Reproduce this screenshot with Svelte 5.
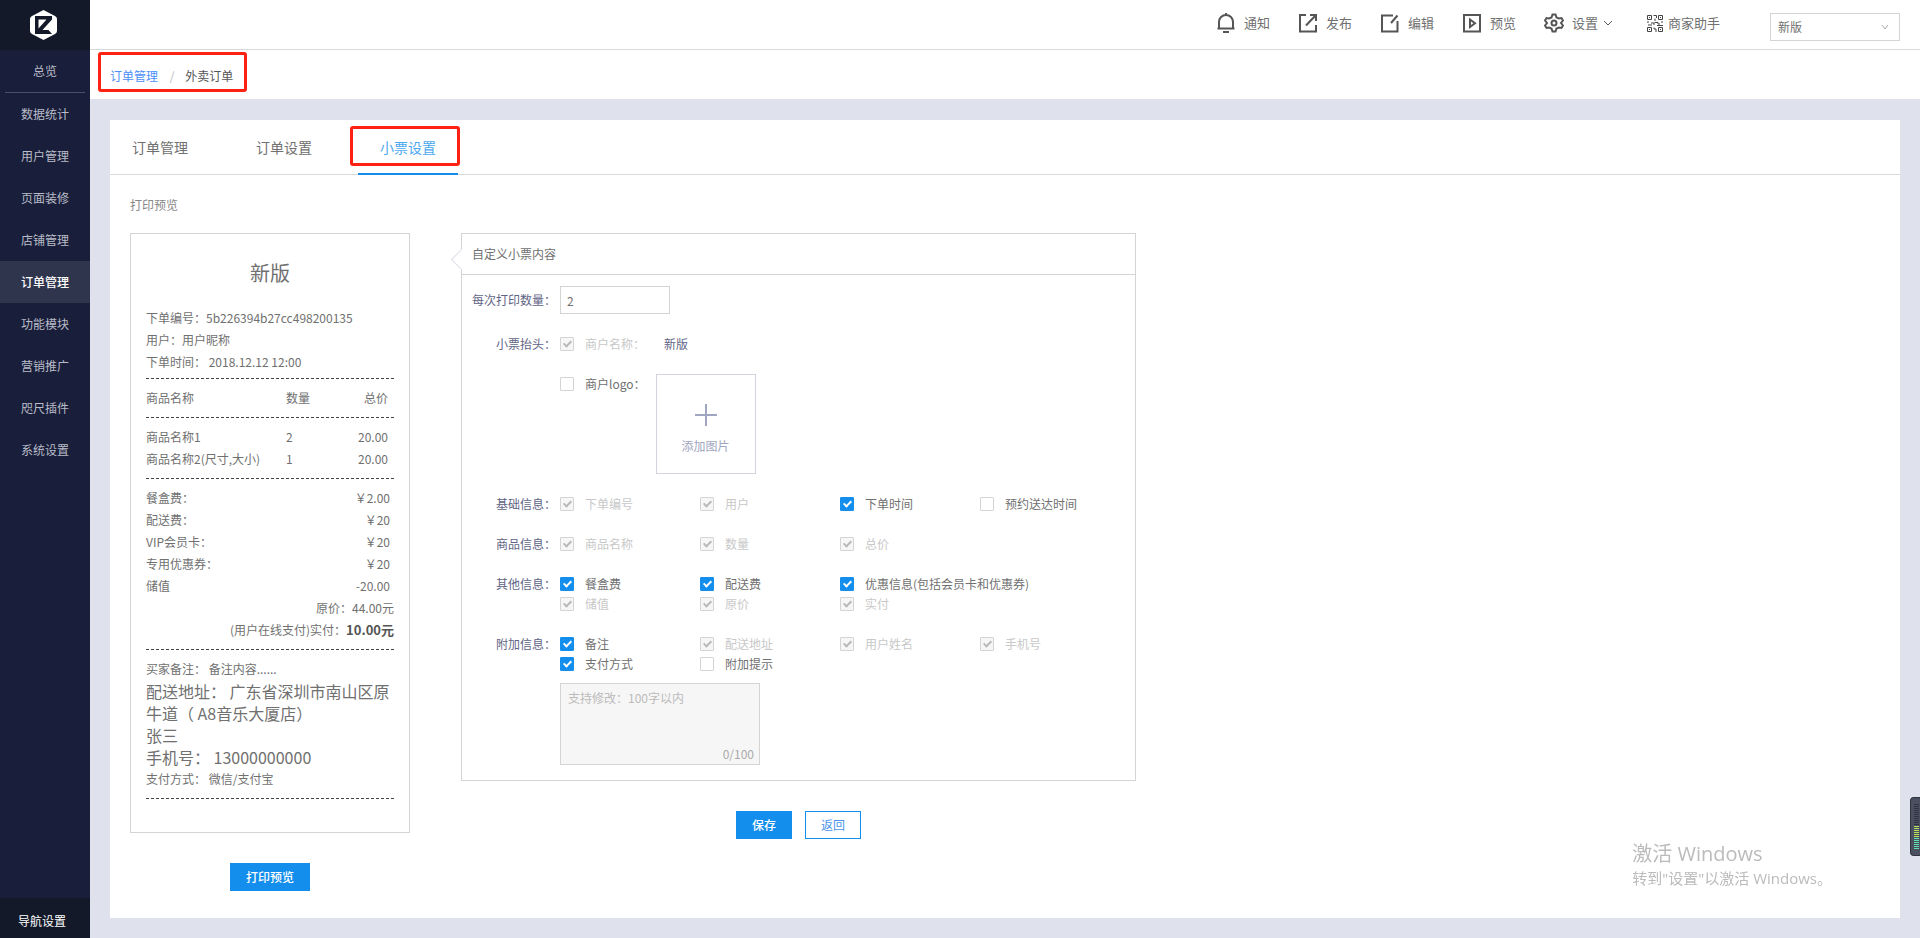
<script lang="ts">
    const menu = ['数据统计', '用户管理', '页面装修', '店铺管理', '订单管理', '功能模块', '营销推广', '咫尺插件', '系统设置'];
    const tabs = ['订单管理', '订单设置', '小票设置'];

    let activeMenu = $state('订单管理');
    let activeTab = $state('小票设置');
    let shop = $state('新版');
    let copies = $state('2');
    let tip = $state('');
    let withLogo = $state(false);

    const goods = [
        { name: '商品名称1', count: 2, price: '20.00' },
        { name: '商品名称2(尺寸,大小)', count: 1, price: '20.00' },
    ];
    const fees = [
        ['餐盒费：', '￥2.00'],
        ['配送费：', '￥20'],
        ['VIP会员卡：', '￥20'],
        ['专用优惠券：', '￥20'],
        ['储值', '-20.00'],
    ];

    let groups = $state([
        { title: '基础信息：', items: [
            { text: '下单编号', on: true, locked: true },
            { text: '用户', on: true, locked: true },
            { text: '下单时间', on: true, locked: false },
            { text: '预约送达时间', on: false, locked: false },
        ] },
        { title: '商品信息：', items: [
            { text: '商品名称', on: true, locked: true },
            { text: '数量', on: true, locked: true },
            { text: '总价', on: true, locked: true },
        ] },
        { title: '其他信息：', items: [
            { text: '餐盒费', on: true, locked: false },
            { text: '配送费', on: true, locked: false },
            { text: '优惠信息(包括会员卡和优惠券)', on: true, locked: false, last: true },
            { text: '储值', on: true, locked: true },
            { text: '原价', on: true, locked: true },
            { text: '实付', on: true, locked: true },
        ] },
        { title: '附加信息：', items: [
            { text: '备注', on: true, locked: false },
            { text: '配送地址', on: true, locked: true },
            { text: '用户姓名', on: true, locked: true },
            { text: '手机号', on: true, locked: true },
            { text: '支付方式', on: true, locked: false },
            { text: '附加提示', on: false, locked: false },
        ] },
    ]);
</script>

<div class="page">
    <aside class="sidebar">
        <a class="logo" href="#home" aria-label="首页">
            <svg width="27" height="30" viewBox="0 0 27 30">
                <path d="M13.5 0 L25 6 Q27 7 27 9 V21 Q27 23 25 24 L13.5 30 L2 24 Q0 23 0 21 V9 Q0 7 2 6 Z" fill="#fff" />
                <path d="M5 6 H22 V9.500 L12.500 20 H18.500 L22 24 H5 Z M8.500 9.500 V18.500 L16.500 9.500 Z" fill="#131929" fill-rule="evenodd" />
            </svg>
        </a>
        <nav>
            <a class="overview" href="#overview">总览</a>
            {#each menu as item}
                <a href="#menu" class:active={activeMenu === item} onclick={() => (activeMenu = item)}>{item}</a>
            {/each}
        </nav>
        <a class="nav-setting" href="#nav">导航设置</a>
    </aside>

    <div class="content">
        <header>
            <div class="tools">
                <a href="#notice">
                    <svg viewBox="0 0 20 20"><path d="M3 15.500 V9 a7 7 0 0 1 14 0 V15.500 M1.500 15.500 H18.500 M10 0 V2 M7 19 H13" /></svg>
                    通知
                </a>
                <a href="#publish">
                    <svg viewBox="0 0 20 20"><path d="M8 2 H2 V18.500 H18 V12 M12 2 H18 V8 M18 2 L8 12.500" /></svg>
                    发布
                </a>
                <a href="#edit">
                    <svg viewBox="0 0 20 20"><path d="M13 2.500 H2 V18.500 H17.500 V8 M17.500 2.500 L11 10" /></svg>
                    编辑
                </a>
                <a href="#preview">
                    <svg viewBox="0 0 20 20"><path d="M2 2 H18 V18.500 H2 Z M8 6.500 V14 L13 10.200 Z" /></svg>
                    预览
                </a>
                <a href="#setting">
                    <svg viewBox="0 0 20 20"><path d="M8.500 1.500 H11.500 L12.500 4.500 L15 5.500 L17.500 5 L19 7.500 L17 10 L19 12.500 L17.500 15 L15 14.500 L12.500 15.500 L11.500 18.500 H8.500 L7.500 15.500 L5 14.500 L2.500 15 L1 12.500 L3 10 L1 7.500 L2.500 5 L5 5.500 L7.500 4.500 Z" /><circle cx="10" cy="10" r="2.500" /></svg>
                    设置
                    <svg class="caret" viewBox="0 0 10 10"><path d="M1 3 L5 7 L9 3" /></svg>
                </a>
                <a href="#helper" class="helper">
                    <svg class="qr" viewBox="0 0 20 20"><path d="M2.500 2.500 H6.500 V6.500 H2.500 Z M13.500 2.500 H17.500 V6.500 H13.500 Z M2.500 14.500 H6.500 V18.500 H2.500 Z M13.500 14.500 H17.500 V18.500 H13.500 Z M4 4.500 H5 M15 4.500 H16 M4 16.500 H5 M15 16.500 H16 M8.500 2.500 H11.500 V5 M10 5.500 V8 M2 9 H4 M3 12 H7 M6 10 H9 V12 M9.500 9.500 H13 V11 H15 M16 9 H18 M9 14.500 V16 H11 V19 M12 12.500 H18" /></svg>
                    商家助手
                </a>
            </div>
            <div class="shop">
                <select bind:value={shop} aria-label="店铺">
                    <option>新版</option>
                </select>
                <svg viewBox="0 0 10 10"><path d="M2 3 L5 7 L8 3" /></svg>
            </div>
        </header>

        <div class="breadcrumb">
            <a href="#orders">订单管理</a>
            <span class="slash">/</span>
            <span>外卖订单</span>
            <i class="mark"></i>
        </div>

        <main>
            <div class="tabs">
                {#each tabs as tab}
                    <button class:active={activeTab === tab} onclick={() => (activeTab = tab)}>
                        {tab}
                        {#if tab === '小票设置'}<i class="mark"></i>{/if}
                    </button>
                {/each}
            </div>

            <h2>打印预览</h2>

            <div class="columns">
                <div class="left">
                    <div class="receipt">
                        <h1>新版</h1>
                        <section class="first">
                            <p>下单编号：5b226394b27cc498200135</p>
                            <p>用户：用户昵称</p>
                            <p>下单时间： 2018.12.12 12:00</p>
                        </section>
                        <table>
                            <thead>
                                <tr><th>商品名称</th><th>数量</th><th>总价</th></tr>
                            </thead>
                            <tbody>
                                {#each goods as g}
                                    <tr><td>{g.name}</td><td>{g.count}</td><td>{g.price}</td></tr>
                                {/each}
                            </tbody>
                        </table>
                        <section>
                            {#each fees as [name, value]}
                                <p class="fee"><span>{name}</span><span>{value}</span></p>
                            {/each}
                            <p class="sum">原价：44.00元</p>
                            <p class="sum">(用户在线支付)实付：<b>10.00元</b></p>
                        </section>
                        <section>
                            <p>买家备注： 备注内容......</p>
                            <p class="big">配送地址： 广东省深圳市南山区原牛道（ A8音乐大厦店）</p>
                            <p class="big">张三</p>
                            <p class="big">手机号： 13000000000</p>
                            <p>支付方式： 微信/支付宝</p>
                        </section>
                    </div>
                    <button class="btn primary">打印预览</button>
                </div>

                <div class="right">
                    <form class="panel" onsubmit={(e) => e.preventDefault()}>
                        <h3>自定义小票内容</h3>
                        <div class="row copies">
                            <label class="title" for="copies">每次打印数量：</label>
                            <input id="copies" type="text" bind:value={copies} />
                        </div>
                        <div class="row">
                            <span class="title">小票抬头：</span>
                            <label class="check locked"><input type="checkbox" checked disabled />商户名称：</label>
                            <span class="shop-name">新版</span>
                        </div>
                        <div class="row logo-row">
                            <span class="title"></span>
                            <label class="check"><input type="checkbox" bind:checked={withLogo} />商户logo：</label>
                            <button class="upload" type="button">
                                <svg width="24" height="24" viewBox="0 0 24 24"><path d="M12 1 V23 M1 12 H23" /></svg>
                                添加图片
                            </button>
                        </div>
                        {#each groups as group}
                            <div class="row">
                                <span class="title">{group.title}</span>
                                <div class="options">
                                    {#each group.items as item}
                                        <label class="check" class:locked={item.locked} class:wide={item.last}>
                                            <input type="checkbox" bind:checked={item.on} disabled={item.locked} />{item.text}
                                        </label>
                                    {/each}
                                </div>
                            </div>
                        {/each}
                        <div class="tip">
                            <textarea bind:value={tip} maxlength="100" placeholder="支持修改：100字以内" aria-label="附加提示内容"></textarea>
                            <span>{tip.length}/100</span>
                        </div>
                    </form>
                    <div class="actions">
                        <button class="btn primary">保存</button>
                        <button class="btn">返回</button>
                    </div>
                </div>
            </div>
        </main>
    </div>

    <div class="watermark">
        <strong>激活 Windows</strong>
        <span>转到"设置"以激活 Windows。</span>
    </div>
    <div class="meter">
        {#each Array(23) as _, n}
            <i class:lit={n > 10} class:low={n > 16}></i>
        {/each}
    </div>
</div>

<style>
    :global(body) {
        background: #dfe1ed;
        color: #707070;
        font: 12px/20px "Noto Sans CJK SC", sans-serif;
    }
    .page * {
        box-sizing: border-box;
    }
    .page {
        display: flex;
        min-height: 100vh;
    }
    a {
        color: inherit;
        text-decoration: none;
    }
    button, input, select, textarea {
        font: inherit;
        color: inherit;
        margin: 0;
    }
    h1, h2, h3, p {
        margin: 0;
        font-weight: normal;
    }
    svg {
        fill: none;
    }

    .sidebar {
        width: 90px;
        flex: none;
        display: flex;
        flex-direction: column;
        background: #191f3a;
        color: #b9bcc8;
        text-align: center;
    }
    .logo {
        height: 50px;
        padding: 10px 4px 0 0;
        background: #131929;
    }
    nav {
        flex: 1;
    }
    nav a {
        display: block;
        line-height: 42px;
    }
    nav .overview {
        margin: 0 5px;
        border-bottom: 1px solid #4b5068;
    }
    nav .active {
        background: #30354e;
        color: #fff;
        font-weight: 500;
    }
    .nav-setting {
        height: 40px;
        padding-right: 6px;
        background: #131929;
        color: #fff;
        line-height: 46px;
    }

    .content {
        flex: 1;
        min-width: 0;
        display: flex;
        flex-direction: column;
    }
    header {
        height: 50px;
        padding-right: 20px;
        display: flex;
        justify-content: flex-end;
        background: #fff;
        border-bottom: 1px solid #d9d9d9;
    }
    .tools {
        display: flex;
        gap: 28px;
        height: 46px;
        align-items: center;
        margin-right: 50px;
        font-size: 13px;
    }
    .tools a {
        display: flex;
        align-items: center;
        gap: 8px;
    }
    .tools .helper {
        gap: 3px;
        margin-left: 4px;
    }
    .tools svg {
        width: 20px;
        height: 20px;
        stroke: #555;
        stroke-width: 2;
    }
    .tools .caret {
        width: 10px;
        height: 10px;
        margin-left: -3px;
        stroke-width: 1;
    }
    .tools .qr {
        stroke: #444;
        stroke-width: 1;
    }
    .shop {
        position: relative;
        width: 130px;
        height: 28px;
        margin-top: 13px;
    }
    .shop select {
        width: 100%;
        height: 28px;
        padding: 0 7px;
        appearance: none;
        background: #fff;
        border: 1px solid #d4d4d4;
        border-radius: 0;
    }
    .shop svg {
        position: absolute;
        right: 10px;
        top: 9px;
        width: 10px;
        height: 10px;
        stroke: #aaa;
        pointer-events: none;
    }

    .breadcrumb {
        position: relative;
        height: 49px;
        padding: 0 20px;
        background: #fff;
        line-height: 51px;
        color: #555;
    }
    .breadcrumb a {
        color: #4b8ff7;
    }
    .slash {
        margin: 0 8px 0 9px;
        color: #bbb;
    }
    .mark {
        position: absolute;
        border: 3px solid #ff2213;
        border-radius: 3px;
        pointer-events: none;
    }
    .breadcrumb .mark {
        left: 8px;
        top: 2px;
        width: 149px;
        height: 40px;
    }

    main {
        flex: 1;
        margin: 21px 20px 20px;
        padding-bottom: 27px;
        background: #fff;
    }
    .tabs {
        display: flex;
        gap: 24px;
        height: 55px;
        border-bottom: 1px solid #d9d9d9;
    }
    .tabs button {
        position: relative;
        width: 100px;
        height: 55px;
        padding: 0 18px 0 22px;
        background: none;
        border: 0;
        border-bottom: 2px solid transparent;
        font-size: 14px;
        white-space: nowrap;
        text-align: left;
    }
    .tabs .active {
        border-color: #138eec;
        color: #4aa8f0;
    }
    .tabs .mark {
        left: -8px;
        top: 6px;
        width: 110px;
        height: 40px;
    }
    h2 {
        margin: 20px 20px 18px;
        font-size: 12px;
        color: #888;
    }
    .columns {
        display: flex;
        gap: 51px;
        padding: 0 20px;
    }
    .left {
        width: 280px;
        text-align: center;
    }
    .receipt {
        min-height: 600px;
        margin-bottom: 30px;
        padding: 24px 15px 0;
        border: 1px solid #d4d4d4;
        text-align: left;
        line-height: 22px;
    }
    .receipt h1 {
        margin-bottom: 19px;
        font-size: 20px;
        line-height: 30px;
        text-align: center;
    }
    .receipt section, thead, tbody {
        padding: 8px 0;
        border-bottom: 1px dashed #444;
    }
    .receipt .first {
        padding: 0 0 5px;
    }
    table, thead, tbody {
        display: block;
    }
    tr {
        display: flex;
    }
    th, td {
        flex: 1;
        padding: 0;
        font-weight: normal;
        text-align: left;
        white-space: nowrap;
    }
    th:first-child, td:first-child {
        flex: 0 0 140px;
    }
    th:last-child, td:last-child {
        padding-right: 6px;
        text-align: right;
    }
    .fee {
        display: flex;
        justify-content: space-between;
        padding-right: 4px;
    }
    .sum {
        text-align: right;
    }
    .sum b {
        font-size: 13px;
        color: #555;
    }
    .big {
        font-size: 16px;
    }

    .btn {
        height: 28px;
        padding: 0 15px;
        background: #fff;
        border: 1px solid #138eec;
        color: #4a94ea;
        line-height: 26px;
    }
    .btn.primary {
        background: #138eec;
        color: #fff;
        font-weight: 500;
    }

    .right {
        flex: 0 1 675px;
    }
    .panel {
        position: relative;
        padding-bottom: 15px;
        border: 1px solid #d4d4d4;
    }
    .panel::before {
        content: "";
        position: absolute;
        left: -8px;
        top: 18px;
        width: 14px;
        height: 14px;
        background: #fff;
        border: solid #dcdfe8;
        border-width: 0 0 1px 1px;
        transform: rotate(45deg);
    }
    h3 {
        margin-bottom: 11px;
        padding-left: 10px;
        border-bottom: 1px solid #d4d4d4;
        font-size: 12px;
        line-height: 40px;
    }
    .row {
        display: flex;
        margin-bottom: 20px;
    }
    .copies {
        align-items: center;
    }
    .title {
        flex: none;
        width: 94px;
        margin-right: 4px;
        text-align: right;
        color: #5f6485;
    }
    .copies input {
        width: 110px;
        height: 28px;
        padding: 0 6px;
        border: 1px solid #d4d4d4;
    }
    .check {
        display: flex;
        align-items: center;
        height: 20px;
        white-space: nowrap;
    }
    .locked {
        color: #c8c8c8;
    }
    .check input {
        appearance: none;
        position: relative;
        width: 14px;
        height: 14px;
        margin-right: 11px;
        border: 1px solid #d4d4d4;
        border-radius: 1px;
        background: #fff;
    }
    .check input:checked {
        background: #138eec;
        border-color: #138eec;
    }
    .check input:disabled {
        background: #f6f6f6;
        border-color: #d4d4d4;
    }
    .check input:checked::after {
        content: "";
        position: absolute;
        left: 4px;
        top: 1px;
        width: 3px;
        height: 6px;
        border: solid #fff;
        border-width: 0 2px 2px 0;
        transform: rotate(45deg);
    }
    .check input:disabled::after {
        border-color: #b8b8b8;
    }
    .shop-name {
        margin-left: 19px;
        color: #5f6485;
    }
    .upload {
        display: flex;
        flex-direction: column;
        align-items: center;
        gap: 9px;
        width: 100px;
        height: 100px;
        margin-left: 10px;
        padding-top: 28px;
        background: #fff;
        border: 1px solid #d2d4de;
        color: #a0a5c0;
    }
    .upload svg {
        flex: none;
        stroke: #a0a5c0;
        stroke-width: 2;
    }
    .options {
        display: grid;
        grid-template-columns: repeat(4, 140px);
    }
    .wide {
        grid-column: span 2;
    }
    .tip {
        position: relative;
        width: 200px;
        margin: -11px 0 0 98px;
    }
    .tip textarea {
        display: block;
        width: 200px;
        height: 82px;
        padding: 4px 7px;
        background: #f6f6f6;
        border: 1px solid #d4d4d4;
        resize: none;
    }
    .tip textarea::placeholder {
        color: #bbb;
    }
    .tip span {
        position: absolute;
        right: 6px;
        bottom: 1px;
        color: #aaa;
    }
    .actions {
        display: flex;
        justify-content: center;
        gap: 13px;
        margin-top: 30px;
    }

    .watermark {
        position: fixed;
        right: 88px;
        bottom: 50px;
        color: #bbb;
        font-family: "Open Sans", "Noto Sans CJK SC", sans-serif;
        font-size: 15px;
        line-height: 20px;
    }
    .watermark strong {
        display: block;
        font-size: 20px;
        font-weight: normal;
        line-height: 28px;
    }
    .meter {
        position: fixed;
        right: 0;
        bottom: 82px;
        width: 10px;
        height: 59px;
        padding: 6px 1px 0 3px;
        background: #4b5060;
        border: 1px solid #30333f;
        border-right: 0;
        border-radius: 4px 0 0 4px;
    }
    .meter i {
        display: block;
        height: 1px;
        margin-bottom: 1px;
        background: #30333f;
    }
    .meter .lit {
        background: #b9e05a;
    }
    .meter .low {
        background: #5ce0b0;
    }
</style>
